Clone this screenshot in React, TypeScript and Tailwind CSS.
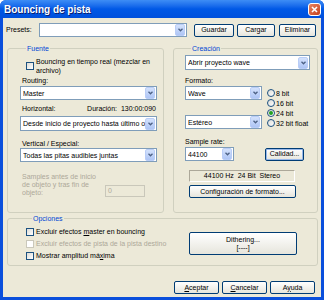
import React from 'react';

const font = { fontFamily: '"Liberation Sans", Arial, sans-serif' };

const Combo: React.FC<{ text?: string; w: string; h?: string }> = ({ text = '', w, h = 'h-[14px]' }) => (
    <div className={`${w} ${h} flex items-center bg-white border border-[#7f9db9] pl-[2px] pr-[1px] shrink-0`}>
        <span className="flex-1 overflow-hidden whitespace-nowrap leading-[9px] text-black">{text}</span>
        <span className="w-[10px] h-[12px] shrink-0 flex items-center justify-center rounded-[2px] bg-gradient-to-b from-[#d4e2fc] to-[#aec5f5] border border-[#b9cdf7]">
            <svg width="5" height="4" viewBox="0 0 5 4">
                <path d="M0.5 0.8 L2.5 2.8 L4.5 0.8" stroke="#4d6185" strokeWidth="1.3" fill="none" />
            </svg>
        </span>
    </div>
);

const Btn: React.FC<{ w: string; h?: string; children: React.ReactNode; focus?: boolean }> = ({ w, h = 'h-[13px]', children, focus }) => (
    <div
        className={`${w} ${h} shrink-0 flex flex-col items-center justify-center rounded-[2px] border border-[#003c74] bg-gradient-to-b from-white to-[#e6e5dc] leading-[8px] text-black ${
            focus ? 'shadow-[inset_0_0_0_1px_#98b8ea]' : ''
        }`}
    >
        {children}
    </div>
);

const Check: React.FC<{ disabled?: boolean }> = ({ disabled }) => (
    <span className={`w-[8px] h-[8px] shrink-0 border bg-gradient-to-br ${disabled ? 'border-[#cac8bb] from-white to-white' : 'border-[#1c5180] from-[#dcdcd7] to-white'}`} />
);

const Radio: React.FC<{ label: string; checked?: boolean }> = ({ label, checked }) => (
    <div className="h-[10px] flex items-center gap-[1px]">
        <span className="w-[8px] h-[8px] rounded-full border border-[#1c5180] bg-gradient-to-br from-[#dcdcd7] to-white flex items-center justify-center">
            {checked && <span className="w-[4px] h-[4px] rounded-full bg-[#21a121]" />}
        </span>
        <span className="leading-[9px]">{label}</span>
    </div>
);

const Group: React.FC<{ title: string; className: string; children: React.ReactNode }> = ({ title, className, children }) => (
    <fieldset className={`border border-[#d0d0bf] rounded-[3px] ${className}`}>
        <legend className="ml-[6px] px-[1px] leading-[9px] text-[#0046d5]">{title}</legend>
        {children}
    </fieldset>
);

export default function App() {
    return (
        <div style={font} className="w-[324px] h-[300px] flex flex-col bg-[#0a4fdc] rounded-t-[6px] text-[7px] text-black overflow-hidden">

            {/* ── Title bar ───────────────────────────────────────────── */}
            <div className="h-[18px] shrink-0 flex items-center justify-between pl-[4px] pr-[3px] bg-gradient-to-b from-[#3d8df5] via-[#0058e6] to-[#0050dc]">
                <span className="text-white font-bold text-[10px] [text-shadow:1px_1px_0_#0a1e6e]">Bouncing de pista</span>
                <span className="w-[13px] h-[13px] rounded-[3px] border border-white bg-gradient-to-br from-[#e8825f] to-[#c4401c] flex items-center justify-center">
                    <svg width="7" height="7" viewBox="0 0 7 7">
                        <path d="M1 1 L6 6 M6 1 L1 6" stroke="white" strokeWidth="1.6" />
                    </svg>
                </span>
            </div>

            {/* ── Body ───────────────────────────────────────────────── */}
            <div className="flex-1 mx-[3px] mb-[3px] bg-[#ece9d8] flex flex-col pt-[5px]">

                {/* Presets */}
                <div className="h-[14px] flex items-center pl-[3px]">
                    <span className="w-[33px]">Presets:</span>
                    <Combo w="w-[148px]" />
                    <div className="ml-[7px]"><Btn w="w-[40px]">Guardar</Btn></div>
                    <div className="ml-[3px]"><Btn w="w-[38px]">Cargar</Btn></div>
                    <div className="ml-[4px]"><Btn w="w-[37px]">Eliminar</Btn></div>
                </div>

                {/* Fuente / Creación */}
                <div className="flex mt-[7px] ml-[4px]">
                    <Group title="Fuente" className="w-[157px] h-[169px] pl-[12px] pr-[5px]">
                        <div className="flex items-center mt-[4px] ml-[6px]">
                            <Check />
                            <span className="ml-[2px] leading-[9px]">Bouncing en tiempo real (mezclar en<br />archivo)</span>
                        </div>
                        <div className="mt-[1px] ml-[2px] leading-[9px]">Routing:</div>
                        <div className="mt-[1px]"><Combo w="w-[137px]" text="Master" /></div>
                        <div className="mt-[4px] ml-[2px] mr-[2px] flex justify-between leading-[9px]">
                            <span>Horizontal:</span>
                            <span>Duración:&nbsp;&nbsp;130:00:090</span>
                        </div>
                        <div className="mt-[3px]"><Combo w="w-[137px]" h="h-[15px]" text="Desde inicio de proyecto hasta último obje" /></div>
                        <div className="mt-[8px] ml-[2px] leading-[9px]">Vertical / Especial:</div>
                        <div className="mt-0"><Combo w="w-[137px]" text="Todas las pitas audibles juntas" /></div>
                        <div className="mt-[11px] ml-[2px] flex items-end">
                            <span className="w-[83px] leading-[8px] text-[#aca899]">Samples antes de inicio<br />de objeto y tras fin de<br />objeto:</span>
                            <span className="w-[40px] h-[12px] border border-[#c9c7ba] text-[#aca899] leading-[10px] pl-[2px]">0</span>
                        </div>
                    </Group>

                    <Group title="Creación" className="ml-[9px] w-[145px] h-[169px] pl-[11px]">
                        <div className="mt-[2px]"><Combo w="w-[125px]" h="h-[15px]" text="Abrir proyecto wave" /></div>
                        <div className="mt-[6px] leading-[9px]">Formato:</div>
                        <div className="flex mt-[1px]">
                            <div className="flex flex-col w-[77px]">
                                <Combo w="w-[77px]" text="Wave" />
                                <div className="mt-[15px]"><Combo w="w-[77px]" text="Estéreo" /></div>
                            </div>
                            <div className="ml-[5px] mt-[2px] flex flex-col">
                                <Radio label="8 bit" />
                                <Radio label="16 bit" />
                                <Radio label="24 bit" checked />
                                <Radio label="32 bit float" />
                            </div>
                        </div>
                        <div className="mt-[8px] leading-[9px]">Sample rate:</div>
                        <div className="flex items-center mt-[1px]">
                            <Combo w="w-[49px]" text="44100" />
                            <div className="ml-[31px]"><Btn w="w-[39px]" focus>Calidad...</Btn></div>
                        </div>
                        <div className="ml-[4px] mt-[9px] w-[106px] h-[12px] flex items-center justify-center border border-t-[#aca899] border-l-[#aca899] border-b-white border-r-white">
                            44100 Hz&nbsp;&nbsp;24 Bit&nbsp;&nbsp;Stereo
                        </div>
                        <div className="ml-[4px] mt-[3px]"><Btn w="w-[107px]">Configuración de formato...</Btn></div>
                    </Group>
                </div>

                {/* Opciones */}
                <Group title="Opciones" className="mt-[1px] ml-[4px] w-[311px] h-[52px] pl-[18px]">
                    <div className="flex">
                        <div className="w-[163px] flex flex-col gap-[2px] mt-[4px]">
                            <div className="h-[10px] flex items-center">
                                <Check />
                                <span className="ml-[2px]">Excluir efectos <u>m</u>aster en bouncing</span>
                            </div>
                            <div className="h-[10px] flex items-center text-[#aca899]">
                                <Check disabled />
                                <span className="ml-[2px]">Excluir efectos de pista de la pista destino</span>
                            </div>
                            <div className="h-[10px] flex items-center">
                                <Check />
                                <span className="ml-[2px]">Mostrar amplitud má<u>x</u>ima</span>
                            </div>
                        </div>
                        <div className="mt-[9px]">
                            <Btn w="w-[108px]" h="h-[23px]">
                                <span>Dithering...</span>
                                <span>[----]</span>
                            </Btn>
                        </div>
                    </div>
                </Group>

                {/* Bottom buttons */}
                <div className="mt-[15px] flex justify-end gap-[3px] pr-[6px]">
                    <Btn w="w-[45px]"><span><u>A</u>ceptar</span></Btn>
                    <Btn w="w-[45px]"><span><u>C</u>ancelar</span></Btn>
                    <Btn w="w-[45px]"><span>A<u>y</u>uda</span></Btn>
                </div>
            </div>
        </div>
    );
}
